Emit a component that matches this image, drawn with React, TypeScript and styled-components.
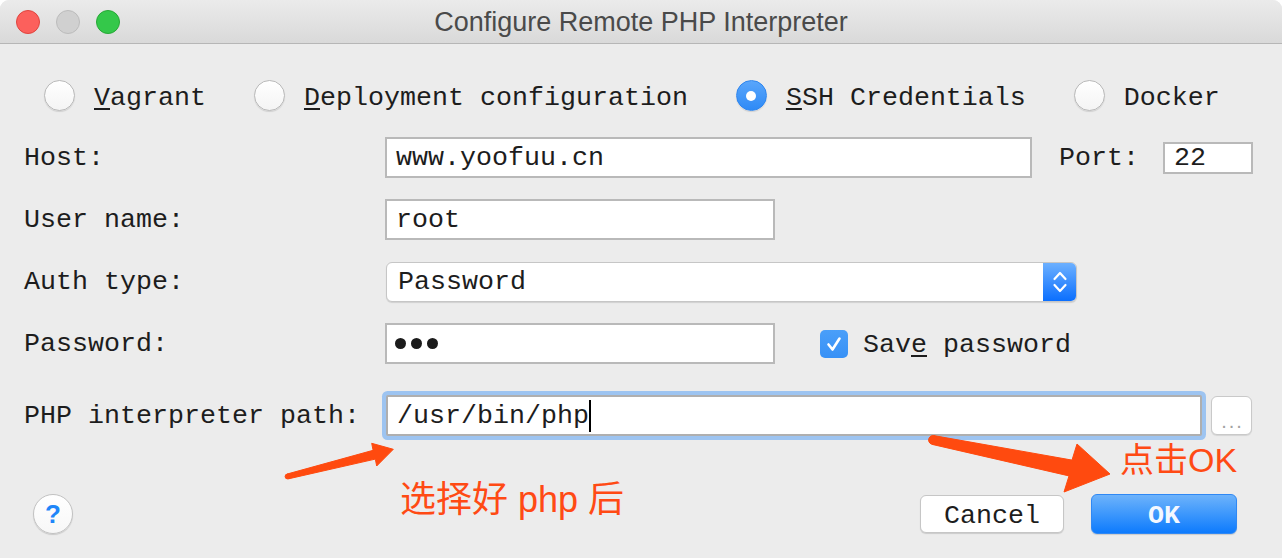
import React from 'react';
import styled, { createGlobalStyle } from 'styled-components';

const Global = createGlobalStyle`
  html, body { margin: 0; padding: 0; background: #ffffff; }
  #root { width: 1282px; height: 558px; }
`;

const Window = styled.div`
  position: relative;
  width: 1282px;
  height: 558px;
  background: #ececec;
  font-family: "Liberation Mono", "Courier New", monospace;
  font-size: 26.67px;
  color: #1d1d1d;
  overflow: hidden;
  display: flex;
  flex-direction: column;
  border-radius: 9px 9px 0 0;
`;

const TitleBar = styled.div`
  height: 44px;
  flex-shrink: 0;
  box-sizing: border-box;
  border-bottom: 1px solid #b6b6b6;
  background: linear-gradient(#ebebeb, #d9d9d9);
  display: grid;
  grid-template-columns: 1fr auto 1fr;
  align-items: center;
`;

const Lights = styled.div`
  display: flex;
  gap: 16px;
  padding-left: 16px;
`;

const Light = styled.span<{ $fill: string; $edge: string }>`
  width: 24px;
  height: 24px;
  box-sizing: border-box;
  border-radius: 50%;
  background: ${(p) => p.$fill};
  border: 1px solid ${(p) => p.$edge};
`;

const Title = styled.div`
  font-family: "Liberation Sans", Arial, sans-serif;
  font-size: 27px;
  color: #4a4a4a;
  padding-top: 1px;
`;

const RadioRow = styled.div`
  margin-top: 36px;
  height: 31px;
  padding-left: 44px;
  display: flex;
  align-items: center;
  gap: 48px;
`;

const RadioItem = styled.label`
  display: flex;
  align-items: center;
  gap: 19px;
`;

const RadioCircle = styled.span<{ $checked?: boolean }>`
  width: 31px;
  height: 31px;
  box-sizing: border-box;
  border-radius: 50%;
  display: flex;
  align-items: center;
  justify-content: center;
  border: 1px solid ${(p) => (p.$checked ? '#2f86ee' : '#b9b9b9')};
  background: ${(p) =>
    p.$checked ? 'linear-gradient(#5aa6fb, #2e8af6)' : 'linear-gradient(#ffffff, #f4f4f4)'};
  box-shadow: 0 1px 1px rgba(0, 0, 0, 0.12);
  &::after {
    content: '';
    display: ${(p) => (p.$checked ? 'block' : 'none')};
    width: 10px;
    height: 10px;
    border-radius: 50%;
    background: #ffffff;
  }
`;

const OptionText = styled.span`
  padding-top: 4px;
  white-space: pre;
`;

const Mnemonic = styled.span`
  text-decoration: underline;
  text-decoration-thickness: 2px;
  text-underline-offset: 3px;
`;

const Form = styled.div`
  margin-top: 26px;
  padding-left: 24px;
  display: flex;
  flex-direction: column;
`;

const Row = styled.div<{ $gap: number }>`
  display: flex;
  align-items: center;
  height: 41px;
  margin-top: ${(p) => p.$gap}px;
`;

const Label = styled.div`
  width: 361px;
  flex-shrink: 0;
  white-space: pre;
`;

const TextField = styled.div<{ $width: number; $height?: number; $focused?: boolean }>`
  width: ${(p) => p.$width}px;
  height: ${(p) => p.$height ?? 41}px;
  box-sizing: border-box;
  flex-shrink: 0;
  border: 2px solid ${(p) => (p.$focused ? '#afafaf' : '#b9b9b9')};
  background: #ffffff;
  padding-left: 9px;
  display: flex;
  align-items: center;
  white-space: pre;
  margin-left: ${(p) => (p.$focused ? 1 : 0)}px;
  border-radius: ${(p) => (p.$focused ? 2 : 0)}px;
  box-shadow: ${(p) => (p.$focused ? '0 0 0 4px #9dc4f1' : 'none')};
`;

const PortLabel = styled.div`
  margin-left: 27px;
  margin-right: 24px;
`;

const Select = styled.div`
  width: 691px;
  height: 40px;
  margin-left: 1px;
  box-sizing: border-box;
  border: 1px solid #c6c6c6;
  border-radius: 6px;
  background: #ffffff;
  box-shadow: 0 1px 1px rgba(0, 0, 0, 0.12);
  display: flex;
  overflow: hidden;
`;

const SelectValue = styled.div`
  flex: 1;
  display: flex;
  align-items: center;
  padding-left: 11px;
`;

const SelectArrows = styled.div`
  width: 33px;
  background: linear-gradient(#6cb0ff, #0b6ffe);
  display: flex;
  align-items: center;
  justify-content: center;
`;

const Checkbox = styled.span`
  width: 28px;
  height: 28px;
  margin-left: 45px;
  border-radius: 5px;
  background: linear-gradient(#4a9ff9, #3791f6);
  display: flex;
  align-items: center;
  justify-content: center;
  flex-shrink: 0;
`;

const CheckText = styled.span`
  margin-left: 15px;
  padding-top: 3px;
  white-space: pre;
`;

const Dots = styled.div`
  display: flex;
  gap: 5px;
  margin-left: -1px;
`;

const Dot = styled.span`
  width: 11px;
  height: 11px;
  border-radius: 50%;
  background: #1b1b1b;
`;

const Caret = styled.span`
  width: 2px;
  height: 32px;
  background: #000000;
`;

const BrowseButton = styled.div`
  width: 41px;
  height: 39px;
  margin-left: 9px;
  box-sizing: border-box;
  border: 1px solid #c9c9c9;
  border-radius: 6px;
  background: #ffffff;
  box-shadow: 0 1px 1px rgba(0, 0, 0, 0.1);
  display: flex;
  align-items: flex-end;
  justify-content: center;
  font-family: "Liberation Sans", Arial, sans-serif;
  font-size: 20px;
  letter-spacing: 2px;
  color: #a2a2a2;
  line-height: 26px;
  padding-left: 2px;
`;

const Footer = styled.div`
  margin-top: 58px;
  height: 40px;
  padding: 0 45px 0 33px;
  display: flex;
  align-items: center;
`;

const HelpButton = styled.div`
  width: 40px;
  height: 40px;
  box-sizing: border-box;
  border-radius: 50%;
  border: 1px solid #c2c2c2;
  background: linear-gradient(#ffffff, #f7f7f7);
  box-shadow: 0 1px 1px rgba(0, 0, 0, 0.15);
  display: flex;
  align-items: center;
  justify-content: center;
  font-family: "Liberation Sans", Arial, sans-serif;
  font-weight: bold;
  font-size: 26px;
  color: #1f86f9;
`;

const Spacer = styled.div`
  flex: 1;
`;

const Button = styled.div<{ $primary?: boolean }>`
  width: ${(p) => (p.$primary ? 146 : 144)}px;
  height: ${(p) => (p.$primary ? 40 : 38)}px;
  box-sizing: border-box;
  border-radius: 6px;
  display: flex;
  align-items: center;
  justify-content: center;
  margin-left: ${(p) => (p.$primary ? 27 : 0)}px;
  border: 1px solid ${(p) => (p.$primary ? '#2f88f4' : '#c6c6c6')};
  background: ${(p) => (p.$primary ? 'linear-gradient(#6db3fb, #0d7bfd)' : '#ffffff')};
  color: ${(p) => (p.$primary ? '#f4f8ff' : '#1d1d1d')};
  font-weight: ${(p) => (p.$primary ? 'bold' : 'normal')};
  box-shadow: 0 1px 1px rgba(0, 0, 0, 0.14);
  padding-top: 3px;
`;

const Note = styled.div<{ $left: number; $top: number; $size: number }>`
  position: absolute;
  left: ${(p) => p.$left}px;
  top: ${(p) => p.$top}px;
  font-family: "Liberation Sans", "Noto Sans CJK SC", sans-serif;
  font-size: ${(p) => p.$size}px;
  line-height: 1;
  color: #ff4a14;
  white-space: pre;
`;

const Overlay = styled.svg`
  position: absolute;
  left: 0;
  top: 0;
  width: 1282px;
  height: 558px;
  pointer-events: none;
`;

export default function App() {
  return (
    <Window>
      <Global />
      <TitleBar>
        <Lights>
          <Light $fill="#fc605c" $edge="#e0443e" />
          <Light $fill="#d0d0d0" $edge="#bcbcbc" />
          <Light $fill="#34c84a" $edge="#27a836" />
        </Lights>
        <Title>Configure Remote PHP Interpreter</Title>
        <div />
      </TitleBar>

      <RadioRow>
        <RadioItem>
          <RadioCircle />
          <OptionText>
            <Mnemonic>V</Mnemonic>agrant
          </OptionText>
        </RadioItem>
        <RadioItem>
          <RadioCircle />
          <OptionText>
            <Mnemonic>D</Mnemonic>eployment configuration
          </OptionText>
        </RadioItem>
        <RadioItem>
          <RadioCircle $checked />
          <OptionText>
            <Mnemonic>S</Mnemonic>SH Credentials
          </OptionText>
        </RadioItem>
        <RadioItem>
          <RadioCircle />
          <OptionText>Docker</OptionText>
        </RadioItem>
      </RadioRow>

      <Form>
        <Row $gap={0}>
          <Label>Host:</Label>
          <TextField $width={647}>www.yoofuu.cn</TextField>
          <PortLabel>Port:</PortLabel>
          <TextField $width={90} $height={32}>22</TextField>
        </Row>
        <Row $gap={21}>
          <Label>User name:</Label>
          <TextField $width={390}>root</TextField>
        </Row>
        <Row $gap={21}>
          <Label>Auth type:</Label>
          <Select>
            <SelectValue>Password</SelectValue>
            <SelectArrows>
              <svg width="16" height="26" viewBox="0 0 16 26">
                <polyline points="2.5,10 8,4 13.5,10" fill="none" stroke="#fff" strokeWidth="2.2" strokeLinecap="round" strokeLinejoin="round" />
                <polyline points="2.5,16 8,22 13.5,16" fill="none" stroke="#fff" strokeWidth="2.2" strokeLinecap="round" strokeLinejoin="round" />
              </svg>
            </SelectArrows>
          </Select>
        </Row>
        <Row $gap={21}>
          <Label>Password:</Label>
          <TextField $width={390}>
            <Dots>
              <Dot />
              <Dot />
              <Dot />
            </Dots>
          </TextField>
          <Checkbox>
            <svg width="20" height="20" viewBox="0 0 20 20">
              <path d="M4.5 10.5 L8.5 15.5 L15.5 4.5" fill="none" stroke="#fff" strokeWidth="2.6" strokeLinecap="round" strokeLinejoin="round" />
            </svg>
          </Checkbox>
          <CheckText>
            Sav<Mnemonic>e</Mnemonic> password
          </CheckText>
        </Row>
        <Row $gap={31}>
          <Label>PHP interpreter path:</Label>
          <TextField $width={816} $focused>
            /usr/bin/php
            <Caret />
          </TextField>
          <BrowseButton>...</BrowseButton>
        </Row>
      </Form>

      <Footer>
        <HelpButton>?</HelpButton>
        <Spacer />
        <Button>Cancel</Button>
        <Button $primary>OK</Button>
      </Footer>

      <Note $left={400} $top={482} $size={36}>选择好 php 后</Note>
      <Note $left={1120} $top={443} $size={34}>点击OK</Note>

      <Overlay viewBox="0 0 1282 558">
        <g fill="#ff4a0f" stroke="#ff4a0f" strokeWidth="1" strokeLinejoin="round">
          <polygon points="286.9,474.1 373.1,450.3 371.7,443.3 393.3,449.3 376.7,466 375.3,459.1 288.1,478.9" />
          <circle cx="287.5" cy="476.5" r="2.4" />
          <polygon points="933.8,435.6 1072,460.1 1077,444 1110,474 1064,492 1069,475.9 932.2,444.4" />
          <circle cx="933" cy="440" r="4.4" />
        </g>
      </Overlay>
    </Window>
  );
}
